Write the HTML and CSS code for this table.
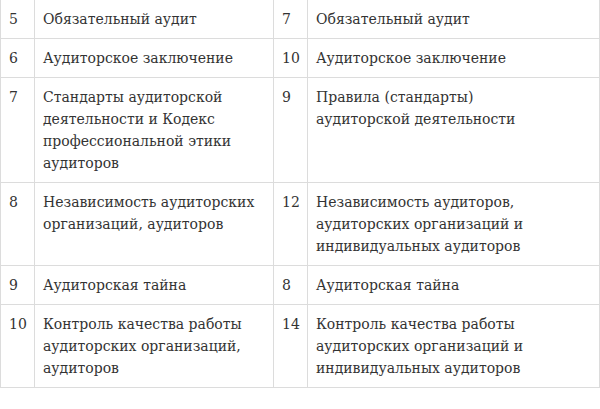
FILE: index.html
```html
<!DOCTYPE html>
<html lang="ru">
<head>
<meta charset="utf-8">
<link rel="stylesheet" href="styles.css">
</head>
<body>
<table class="cmp">
  <colgroup>
    <col class="c-num"><col class="c-left"><col class="c-num"><col class="c-right">
  </colgroup>
  <tbody>
    <tr><td>5</td><td>Обязательный аудит</td><td>7</td><td>Обязательный аудит</td></tr>
    <tr><td>6</td><td>Аудиторское заключение</td><td>10</td><td>Аудиторское заключение</td></tr>
    <tr><td>7</td><td>Стандарты аудиторской деятельности и Кодекс профессиональной этики аудиторов</td><td>9</td><td>Правила (стандарты)<br>аудиторской деятельности</td></tr>
    <tr><td>8</td><td>Независимость аудиторских организаций, аудиторов</td><td>12</td><td>Независимость аудиторов, аудиторских организаций и индивидуальных аудиторов</td></tr>
    <tr><td>9</td><td>Аудиторская тайна</td><td>8</td><td>Аудиторская тайна</td></tr>
    <tr><td>10</td><td>Контроль качества работы аудиторских организаций, аудиторов</td><td>14</td><td>Контроль качества работы аудиторских организаций и индивидуальных аудиторов</td></tr>
  </tbody>
</table>
</body>
</html>
```

FILE: styles.css
```css
html, body {
  margin: 0;
  padding: 0;
  background: #ffffff;
}
.cmp {
  border-collapse: collapse;
  table-layout: fixed;
  width: 599px;
  margin-top: -1px;
  font-family: "DejaVu Serif", serif;
  font-size: 14px;
  line-height: 22px;
  color: #333333;
}
.c-num { width: 34px; }
.c-left { width: 239px; }
.c-right { width: 292px; }
.cmp td {
  border: 1px solid #dcdcdc;
  padding: 8px 7px 8px 8px;
  vertical-align: top;
  text-align: left;
}
```
